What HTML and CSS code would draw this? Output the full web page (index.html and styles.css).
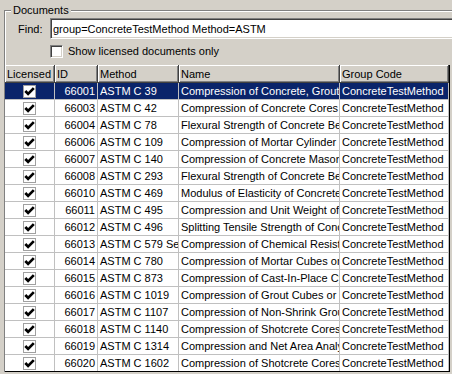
FILE: index.html
```html
<!DOCTYPE html>
<html lang="en">
<head>
    <meta charset="UTF-8">
    <meta name="viewport" content="width=device-width, initial-scale=1.0">
    <title>Documents</title>
    <link rel="stylesheet" href="styles.css">
</head>
<body>
    <svg class="defs" width="0" height="0">
        <symbol id="tick" viewBox="0 0 11 11">
            <path d="M1.3 5 L4.1 7.9 L9.8 2.1" fill="none" stroke="#000" stroke-width="2.7"/>
        </symbol>
    </svg>

    <fieldset class="group">
        <legend>Documents</legend>
        <div class="find-row">
            <label for="find">Find:</label>
            <input type="text" id="find" value="group=ConcreteTestMethod Method=ASTM">
        </div>
        <label class="licensed-only">
            <span class="box"></span>
            Show licensed documents only
        </label>

        <div class="grid-pane">
            <table class="grid">
                <colgroup>
                    <col class="w-lic"><col class="w-id"><col class="w-method"><col class="w-name"><col class="w-group">
                </colgroup>
                <thead>
                    <tr><th>Licensed</th><th>ID</th><th>Method</th><th>Name</th><th>Group Code</th></tr>
                </thead>
                <tbody>
                    <tr class="selected"><td><span class="cb"><svg><use href="#tick"/></svg></span></td><td class="id">66001</td><td>ASTM C 39</td><td>Compression of Concrete, Grout Cylinders</td><td>ConcreteTestMethod</td></tr>
                    <tr><td><span class="cb"><svg><use href="#tick"/></svg></span></td><td class="id">66003</td><td>ASTM C 42</td><td>Compression of Concrete Cores</td><td>ConcreteTestMethod</td></tr>
                    <tr><td><span class="cb"><svg><use href="#tick"/></svg></span></td><td class="id">66004</td><td>ASTM C 78</td><td>Flexural Strength of Concrete Beams</td><td>ConcreteTestMethod</td></tr>
                    <tr><td><span class="cb"><svg><use href="#tick"/></svg></span></td><td class="id">66006</td><td>ASTM C 109</td><td>Compression of Mortar Cylinder</td><td>ConcreteTestMethod</td></tr>
                    <tr><td><span class="cb"><svg><use href="#tick"/></svg></span></td><td class="id">66007</td><td>ASTM C 140</td><td>Compression of Concrete Masonry Units</td><td>ConcreteTestMethod</td></tr>
                    <tr><td><span class="cb"><svg><use href="#tick"/></svg></span></td><td class="id">66008</td><td>ASTM C 293</td><td>Flexural Strength of Concrete Beams</td><td>ConcreteTestMethod</td></tr>
                    <tr><td><span class="cb"><svg><use href="#tick"/></svg></span></td><td class="id">66010</td><td>ASTM C 469</td><td>Modulus of Elasticity of Concrete</td><td>ConcreteTestMethod</td></tr>
                    <tr><td><span class="cb"><svg><use href="#tick"/></svg></span></td><td class="id">66011</td><td>ASTM C 495</td><td>Compression and Unit Weight of Concrete</td><td>ConcreteTestMethod</td></tr>
                    <tr><td><span class="cb"><svg><use href="#tick"/></svg></span></td><td class="id">66012</td><td>ASTM C 496</td><td>Splitting Tensile Strength of Concrete</td><td>ConcreteTestMethod</td></tr>
                    <tr><td><span class="cb"><svg><use href="#tick"/></svg></span></td><td class="id">66013</td><td>ASTM C 579 Sec B</td><td>Compression of Chemical Resistant Mortars</td><td>ConcreteTestMethod</td></tr>
                    <tr><td><span class="cb"><svg><use href="#tick"/></svg></span></td><td class="id">66014</td><td>ASTM C 780</td><td>Compression of Mortar Cubes or Cylinders</td><td>ConcreteTestMethod</td></tr>
                    <tr><td><span class="cb"><svg><use href="#tick"/></svg></span></td><td class="id">66015</td><td>ASTM C 873</td><td>Compression of Cast-In-Place Cylinders</td><td>ConcreteTestMethod</td></tr>
                    <tr><td><span class="cb"><svg><use href="#tick"/></svg></span></td><td class="id">66016</td><td>ASTM C 1019</td><td>Compression of Grout Cubes or Prisms</td><td>ConcreteTestMethod</td></tr>
                    <tr><td><span class="cb"><svg><use href="#tick"/></svg></span></td><td class="id">66017</td><td>ASTM C 1107</td><td>Compression of Non-Shrink Grout</td><td>ConcreteTestMethod</td></tr>
                    <tr><td><span class="cb"><svg><use href="#tick"/></svg></span></td><td class="id">66018</td><td>ASTM C 1140</td><td>Compression of Shotcrete Cores</td><td>ConcreteTestMethod</td></tr>
                    <tr><td><span class="cb"><svg><use href="#tick"/></svg></span></td><td class="id">66019</td><td>ASTM C 1314</td><td>Compression and Net Area Analysis</td><td>ConcreteTestMethod</td></tr>
                    <tr><td><span class="cb"><svg><use href="#tick"/></svg></span></td><td class="id">66020</td><td>ASTM C 1602</td><td>Compression of Shotcrete Cores</td><td>ConcreteTestMethod</td></tr>
                </tbody>
            </table>
        </div>
    </fieldset>
</body>
</html>
```

FILE: styles.css
```css
html {
    overflow: hidden;
}
body {
    margin: 0;
    background: #d4d0c8;
    font-family: "Liberation Sans", Arial, sans-serif;
    font-size: 11px;
    color: #000;
}
.defs {
    position: absolute;
}

/* group box */
.group {
    margin: 4px 0 0 4px;
    padding: 0;
    width: 480px;
    min-width: 0;
    border: 1px solid #808080;
    border-right: none;
    border-bottom: none;
    box-shadow: inset 1px 1px 0 #fff;
}
.group legend {
    margin-left: 6px;
    padding: 0 2px;
    line-height: 13px;
    background: #d4d0c8;
}

/* find line */
.find-row {
    display: flex;
    align-items: center;
    margin-top: 1px;
    padding-left: 13px;
}
.find-row label {
    width: 32px;
}
.find-row input {
    box-sizing: border-box;
    width: 420px;
    height: 21px;
    margin: 0;
    padding: 0 2px;
    border: 1px solid;
    border-color: #808080 #fff #fff #808080;
    box-shadow: inset 1px 1px 0 #404040, inset -1px -1px 0 #d4d0c8;
    background: #fff;
    font-family: inherit;
    font-size: 11px;
    color: #000;
    outline: none;
}

.licensed-only {
    display: flex;
    align-items: center;
    gap: 5px;
    margin: 6px 0 0 45px;
    line-height: 13px;
}
.licensed-only .box {
    box-sizing: border-box;
    width: 13px;
    height: 13px;
    border: 1px solid;
    border-color: #808080 #fff #fff #808080;
    box-shadow: inset 1px 1px 0 #404040, inset -1px -1px 0 #d4d0c8;
    background: #fff;
}

/* table */
.grid-pane {
    width: 444px;
    height: 306px;
    margin-top: 7px;
    overflow: hidden;
    border-right: 1px solid #000;
    border-bottom: 1px solid #000;
}
.grid {
    width: 444px;
    table-layout: fixed;
    border-collapse: separate;
    border-spacing: 0;
}
.w-lic { width: 50px; }
.w-id { width: 43px; }
.w-method { width: 81px; }
.w-name { width: 161px; }
.w-group { width: 109px; }

.grid th {
    box-sizing: border-box;
    height: 18px;
    padding: 0 2px;
    text-align: left;
    font-weight: normal;
    white-space: nowrap;
    overflow: hidden;
    background: #d4d0c8;
    border-right: 1px solid #404040;
    border-bottom: 1px solid #404040;
    box-shadow: inset 1px 1px 0 #fff, inset -1px -1px 0 #808080;
}
.grid td {
    box-sizing: border-box;
    height: 17px;
    padding: 0 2px;
    line-height: 16px;
    white-space: nowrap;
    overflow: hidden;
    text-overflow: clip;
    background: #fff;
    border-right: 1px solid #c0c0c0;
    border-bottom: 1px solid #c0c0c0;
}
.grid td.id {
    text-align: right;
}
.grid tr.selected td {
    background: #0a246a;
    color: #fff;
}

.cb {
    display: block;
    box-sizing: border-box;
    width: 13px;
    height: 13px;
    margin: 0 auto;
    border: 1px solid #a0a0a0;
    background: #fff;
}
.cb svg {
    display: block;
    width: 11px;
    height: 11px;
}
```
